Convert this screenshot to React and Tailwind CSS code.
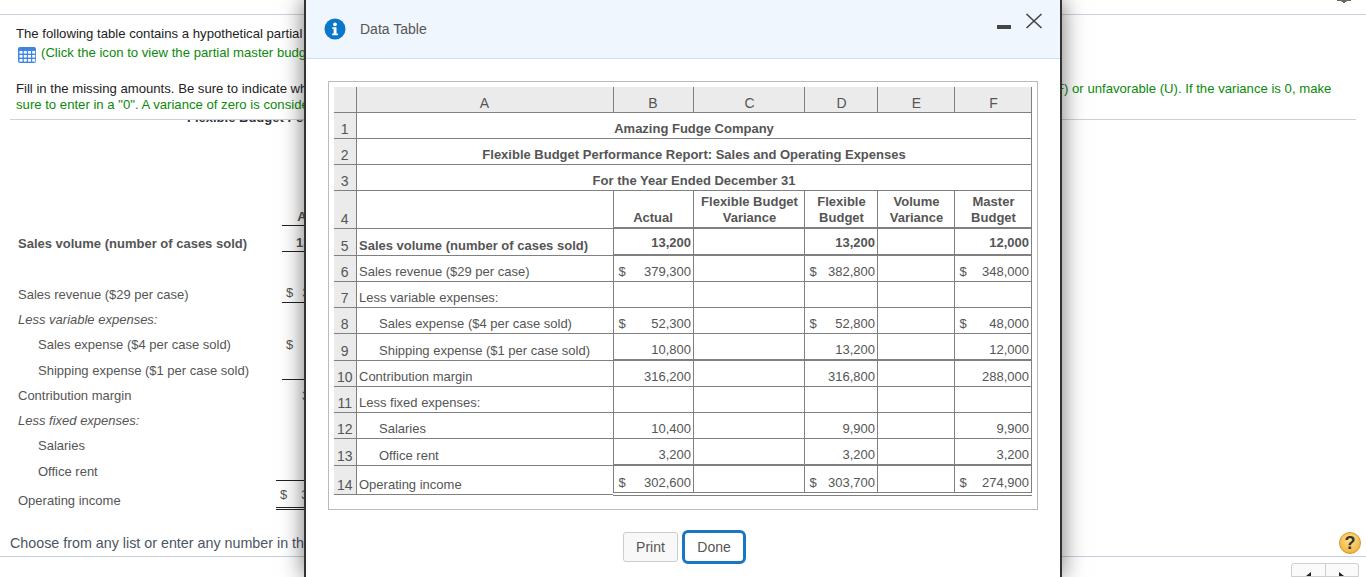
import React from "react";

const filas = [
  { n: 5, label: "Sales volume (number of cases sold)", bold: true, b: "13,200", d: "13,200", f: "12,000", h: "h-[27px]", under: true, numPb: "pb-[3px]", labelPb: "pb-[1px]" },
  { n: 6, label: "Sales revenue ($29 per case)", b: "379,300", d: "382,800", f: "348,000", dollar: true, h: "h-[26px]" },
  { n: 7, label: "Less variable expenses:", h: "h-[26px]" },
  { n: 8, label: "Sales expense ($4 per case sold)", indent: true, b: "52,300", d: "52,800", f: "48,000", dollar: true, h: "h-[26px]" },
  { n: 9, label: "Shipping expense ($1 per case sold)", indent: true, b: "10,800", d: "13,200", f: "12,000", h: "h-[27px]", under: true },
  { n: 10, label: "Contribution margin", b: "316,200", d: "316,800", f: "288,000", h: "h-[26px]" },
  { n: 11, label: "Less fixed expenses:", h: "h-[26px]" },
  { n: 12, label: "Salaries", indent: true, b: "10,400", d: "9,900", f: "9,900", h: "h-[26px]" },
  { n: 13, label: "Office rent", indent: true, b: "3,200", d: "3,200", f: "3,200", h: "h-[27px]", under: true },
  { n: 14, label: "Operating income", b: "302,600", d: "303,700", f: "274,900", dollar: true, h: "h-[29px]", total: true },
];

const bordeFila = (fila) =>
  fila.total ? "border-b-4 border-double" : fila.under ? "border-b-2" : "border-b";

function Monto({ fila, valor }) {
  return (
    <td className={`border-x border-t border-[#808080] pl-[5px] pr-[1.5px] align-bottom ${fila.numPb || "pb-[1px]"} ${bordeFila(fila)} ${fila.bold ? "font-bold" : ""}`}>
      {valor && (
        <div className="flex justify-between">
          <span>{fila.dollar ? "$" : ""}</span>
          <span>{valor}</span>
        </div>
      )}
    </td>
  );
}

function Vacia({ fila }) {
  return <td className={`border-x border-t border-[#808080] ${bordeFila(fila)}`} />;
}

function DataTable() {
  return (
    <table className="table-fixed border-collapse text-[13px] leading-[16px] text-[#555] w-[697px]">
      <colgroup>
        <col className="w-[22px]" />
        <col className="w-[257px]" />
        <col className="w-[80px]" />
        <col className="w-[111px]" />
        <col className="w-[73px]" />
        <col className="w-[77px]" />
        <col className="w-[77px]" />
      </colgroup>
      <tbody>
        <tr className="h-[25px] bg-[#ebebeb] text-center align-bottom text-[14px]">
          <td className="border-b border-r border-[#808080]" />
          {["A", "B"].map((c) => (
            <td key={c} className="border border-t-0 border-[#808080] pb-[1px]">{c}</td>
          ))}
          {["C", "D", "E", "F"].map((c) => (
            <td key={c} className="border border-t-0 border-[#808080] pb-[1px] pl-[2px]">{c}</td>
          ))}
        </tr>
        {["Amazing Fudge Company", "Flexible Budget Performance Report: Sales and Operating Expenses", "For the Year Ended December 31"].map((t, i) => (
          <tr key={t} className="h-[26px] align-bottom">
            <td className="bg-[#ebebeb] border-y border-r border-[#808080] text-center text-[14px] pb-[1px]">{i + 1}</td>
            <td colSpan={6} className="border border-[#808080] text-center font-bold pb-[1px] pl-[1px]">{t}</td>
          </tr>
        ))}
        <tr className="h-[38px] font-bold text-center align-bottom">
          <td className="bg-[#ebebeb] border-y border-r border-[#808080] font-normal text-[14px] pb-[1px]">4</td>
          <td className="border border-[#808080]" />
          <td className="border-x border-t border-b-2 border-[#808080] pb-[1px]">Actual</td>
          <td className="border-x border-t border-b-2 border-[#808080] pb-[1px] pl-[2px]">Flexible Budget<br />Variance</td>
          <td className="border-x border-t border-b-2 border-[#808080] pb-[1px] pl-[2px]">Flexible<br />Budget</td>
          <td className="border-x border-t border-b-2 border-[#808080] pb-[1px] pl-[2px]">Volume<br />Variance</td>
          <td className="border-x border-t border-b-2 border-[#808080] pb-[1px] pl-[2px]">Master<br />Budget</td>
        </tr>
        {filas.map((fila) => (
          <tr key={fila.n} className={fila.h}>
            <td className="bg-[#ebebeb] border-y border-r border-[#808080] text-center text-[14px] whitespace-nowrap align-bottom pb-[1px]">{fila.n}</td>
            <td className={`border border-[#808080] align-bottom ${fila.labelPb || "pb-[1px]"} ${fila.indent ? "pl-[22.5px]" : "pl-[2.5px]"} ${fila.bold ? "font-bold" : ""} whitespace-nowrap`}>
              {fila.label}
            </td>
            <Monto fila={fila} valor={fila.b} />
            <Vacia fila={fila} />
            <Monto fila={fila} valor={fila.d} />
            <Vacia fila={fila} />
            <Monto fila={fila} valor={fila.f} />
          </tr>
        ))}
      </tbody>
    </table>
  );
}

function IconoTabla() {
  return (
    <svg width="18" height="16" viewBox="0 0 18 16" className="shrink-0 mt-[2px] -mb-[2px]">
      <rect x="0" y="0" width="18" height="16" rx="2" fill="#3f86e0" />
      {[4, 8, 12].map((y) =>
        [1.5, 5.8, 10, 14.2].map((x) => (
          <rect key={`${x}-${y}`} x={x} y={y} width="3" height="2.6" fill="#fff" />
        ))
      )}
    </svg>
  );
}

function Fondo() {
  return (
    <div className="flex flex-col h-[577px] text-[13px] leading-[16px]">
      <div className="h-[15px] border-b border-[#cbd2dd] flex justify-end pr-[15px]">
        <svg width="14" height="3" viewBox="0 0 14 3">
          <path d="M0 0h14v1H9.5v1H8v1H6V2H4.5V1H0z" fill="#666" />
        </svg>
      </div>
      <div className="h-[105px] px-[16px] text-[13.15px]">
        <p className="mt-[11px] text-[#222] whitespace-nowrap">The following table contains a hypothetical partial master budget performance report.</p>
        <p className="mt-[3px] flex items-center gap-[5px] pl-[2px] text-[#0a8a0a] whitespace-nowrap">
          <IconoTabla />
          (Click the icon to view the partial master budget.)
        </p>
        <p className="mt-[20px] flex whitespace-nowrap text-[#222]">
          <span className="w-[1040px] shrink-0">Fill in the missing amounts. Be sure to indicate whether each variance is favorable (</span>
          <span className="text-[#0a8a0a]">F) or unfavorable (U). If the variance is 0, make</span>
        </p>
        <p className="text-[#0a8a0a] whitespace-nowrap">sure to enter in a "0". A variance of zero is considered neither favorable nor unfavorable.</p>
      </div>
      <div className="mx-[10px] border-b border-[#cbd2dd] -mt-[1px]" />
      <div className="h-[408px] overflow-hidden text-[#555] pl-[18px]">
        <div className="-mt-[14px] h-[24px] flex items-center pl-[169px] font-bold whitespace-nowrap text-[#333]">Flexible Budget Performance</div>
        <div className="h-[70px]" />
        <div className="h-[26px] flex">
          <div className="w-[264px]" />
          <div className="w-[70px] border-b border-[#222] font-bold flex items-end justify-center">Actual</div>
        </div>
        <div className="h-[34px] flex font-bold">
          <div className="w-[264px] flex items-center pt-[2px] whitespace-nowrap">Sales volume (number of cases sold)</div>
          <div className="w-[70px] h-[26px] border-b border-[#222] flex items-end pl-[14px]">13,200</div>
        </div>
        <div className="h-[22px]" />
        <div className="h-[24px] flex">
          <div className="w-[264px] flex items-center pt-[2px] whitespace-nowrap">Sales revenue ($29 per case)</div>
          <div className="w-[70px] h-[21px] border-b border-[#222] flex items-end pl-[4px] pb-[1px] gap-[9px]"><span>$</span><span>379,300</span></div>
        </div>
        <div className="h-[26px] flex items-center pt-[2px] italic">Less variable expenses:</div>
        <div className="h-[24px] flex items-center pt-[2px] pl-[20px]">
          <div className="w-[244px] whitespace-nowrap">Sales expense ($4 per case sold)</div>
          <div className="pl-[4px]">$</div>
        </div>
        <div className="h-[28px] flex">
          <div className="w-[264px] flex items-center pt-[2px] pl-[20px] whitespace-nowrap">Shipping expense ($1 per case sold)</div>
          <div className="w-[70px] h-[24px] border-b border-[#222]" />
        </div>
        <div className="h-[22px] flex items-center pt-[2px]">
          <div className="w-[264px]">Contribution margin</div>
          <div className="pl-[20px]">316,200</div>
        </div>
        <div className="h-[28px] flex items-center pt-[2px] italic">Less fixed expenses:</div>
        <div className="h-[22px] flex items-center pt-[2px] pl-[20px]">Salaries</div>
        <div className="h-[24px] flex items-center pl-[20px] pt-[8px]">Office rent</div>
        <div className="h-[40px] flex">
          <div className="w-[258px] flex items-center pt-[2px] whitespace-nowrap">Operating income</div>
          <div className="w-[76px] h-[30px] border-t border-b-[3px] border-double border-[#222] flex items-center pt-[2px] pl-[4px] gap-[14px]"><span>$</span><span>302,600</span></div>
        </div>
      </div>
      <div className="h-[31px] border-b border-[#c6cfdc] pl-[10px] pr-[5px] pt-[4px] flex items-center justify-between">
        <span className="text-[14.3px] text-[#4b5563] whitespace-nowrap">Choose from any list or enter any number in the input fields and then continue to the next question.</span>
        <span className="w-[22px] h-[22px] rounded-full border border-[#d8952a] bg-[radial-gradient(circle_at_50%_35%,#fde08a,#eeaa2e)] text-[#333] font-bold text-[18px] flex items-center justify-center shrink-0">?</span>
      </div>
      <div className="flex justify-end pr-[7px] pt-[6px]">
        <div className="flex w-[68px] h-[14px] border border-[#cfcfcf] rounded-t-[3px] bg-[#fafafa] overflow-hidden">
          <div className="flex-1 border-r border-[#cfcfcf] flex justify-center pt-[8px]">
            <span className="border-y-[4px] border-r-[5px] border-y-transparent border-r-[#222] h-0 w-0" />
          </div>
          <div className="flex-1 flex justify-center pt-[8px]">
            <span className="border-y-[4px] border-l-[5px] border-y-transparent border-l-[#222] h-0 w-0" />
          </div>
        </div>
      </div>
    </div>
  );
}

function Modal() {
  return (
    <div className="absolute left-[304px] top-0 w-[758px] h-[577px] bg-white border-x-2 border-[#333] shadow-[0_0_22px_rgba(0,0,0,0.55)]">
      <div className="relative h-[59px] bg-[#f0f6fd] border-b border-[#c8e2fa] flex items-center pl-[18px]">
        <svg width="22" height="22" viewBox="0 0 22 22" className="shrink-0">
          <circle cx="11" cy="11" r="10.5" fill="#0a77c8" />
          <circle cx="11" cy="6.3" r="1.9" fill="#fff" />
          <path d="M8.2 9.2h4.3v6.4h1.4v1.6H8.2v-1.6h1.4v-4.8H8.2z" fill="#fff" />
        </svg>
        <span className="ml-[14px] text-[14px] text-[#555]">Data Table</span>
        <div className="absolute left-[691px] top-[25px] w-[14px] h-[4px] bg-[#444]" />
        <svg width="18" height="16" viewBox="0 0 18 16" className="absolute left-[719px] top-[13px]">
          <path d="M1.5 1l15 14M16.5 1l-15 14" stroke="#444" strokeWidth="1.6" fill="none" />
        </svg>
      </div>
      <div className="ml-[22px] mt-[22px] w-[710px] h-[429px] border border-[#bbb] pl-[5px] pt-[5px]">
        <DataTable />
      </div>
      <div className="flex justify-center items-center gap-[4px] mt-[20px] pl-[3px] text-[14px] text-[#555]">
        <button className="w-[55px] h-[30px] bg-[#f8f8f8] border border-[#ccc] rounded-[3px]">Print</button>
        <button className="w-[64px] h-[34px] bg-white border-[3px] border-[#1a76c2] rounded-[6px]">Done</button>
      </div>
    </div>
  );
}

export default function App() {
  return (
    <div className="relative w-[1366px] h-[577px] overflow-hidden bg-white font-['Liberation_Sans',Arial,sans-serif]">
      <Fondo />
      <Modal />
    </div>
  );
}
